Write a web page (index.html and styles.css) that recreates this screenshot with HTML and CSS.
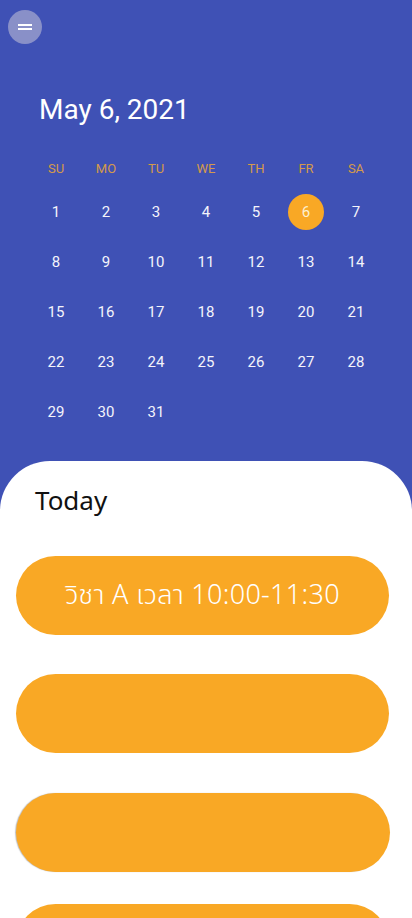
FILE: index.html
```html
<!DOCTYPE html>
<html lang="th">
<head>
<meta charset="utf-8">
<meta name="viewport" content="width=device-width, initial-scale=1">
<link rel="stylesheet" href="styles.css">
</head>
<body>
<div class="header">
  <button class="menu" aria-label="menu">
    <svg width="14" height="8" viewBox="0 0 14 8"><rect x="0" y="1" width="14" height="2" fill="#fff"/><rect x="0" y="5" width="14" height="2" fill="#fff"/></svg>
  </button>
  <div class="date">May 6, 2021</div>
  <div class="cal">
    <div class="wd">SU</div><div class="wd">MO</div><div class="wd">TU</div><div class="wd">WE</div><div class="wd">TH</div><div class="wd">FR</div><div class="wd">SA</div>
    <div class="d">1</div><div class="d">2</div><div class="d">3</div><div class="d">4</div><div class="d">5</div><div class="d"><span class="sel">6</span></div><div class="d">7</div>
    <div class="d">8</div><div class="d">9</div><div class="d">10</div><div class="d">11</div><div class="d">12</div><div class="d">13</div><div class="d">14</div>
    <div class="d">15</div><div class="d">16</div><div class="d">17</div><div class="d">18</div><div class="d">19</div><div class="d">20</div><div class="d">21</div>
    <div class="d">22</div><div class="d">23</div><div class="d">24</div><div class="d">25</div><div class="d">26</div><div class="d">27</div><div class="d">28</div>
    <div class="d">29</div><div class="d">30</div><div class="d">31</div>
  </div>
</div>
<div class="sheet">
  <div class="today">Today</div>
  <div class="card card-first">วิชา A เวลา 10:00-11:30</div>
  <div class="card card-second"></div>
  <div class="card card-third"></div>
  <div class="card card-last"></div>
</div>
</body>
</html>
```
FILE: styles.css
```css
html, body {
  margin: 0;
  padding: 0;
}
body {
  background: #3f51b5;
  font-family: Roboto, "Noto Sans", sans-serif;
  height: 918px;
  overflow: hidden;
}
.header {
  padding: 10px 0 24px 0;
}
.menu {
  display: flex;
  align-items: center;
  justify-content: center;
  width: 34px;
  height: 34px;
  margin-left: 8px;
  padding: 0;
  border: none;
  border-radius: 50%;
  background: #8990c8;
}
.date {
  margin: 50px 0 0 39px;
  font-size: 28px;
  line-height: 32px;
  color: #fff;
}
.cal {
  display: grid;
  grid-template-columns: repeat(7, 50px);
  grid-template-rows: 37px repeat(5, 50px);
  margin: 24px 0 0 31px;
}
.wd {
  display: flex;
  align-items: center;
  justify-content: center;
  padding-bottom: 1px;
  font-size: 13px;
  color: #d49a4a;
}
.d {
  display: flex;
  align-items: center;
  justify-content: center;
  font-size: 15px;
  color: #f4f4fb;
}
.sel {
  display: flex;
  align-items: center;
  justify-content: center;
  width: 36px;
  height: 36px;
  border-radius: 50%;
  background: #f9a825;
  color: #fdf0d0;
}
.sheet {
  box-sizing: border-box;
  background: #fff;
  border-radius: 50px 50px 0 0;
  padding: 21px 0 0 0;
  height: 457px;
  overflow: hidden;
}
.today {
  margin-left: 35px;
  font-family: "Noto Sans", sans-serif;
  font-size: 26px;
  line-height: 36px;
  color: #111;
}
.card {
  display: flex;
  align-items: center;
  justify-content: center;
  flex-shrink: 0;
  width: 373px;
  height: 79px;
  margin-left: 16px;
  border-radius: 40px;
  background: #f9a825;
  color: #fff;
  font-family: "Noto Sans", "Noto Sans Thai", sans-serif;
  font-size: 27px;
  font-weight: 300;
  letter-spacing: 0.3px;
}
.card-first {
  margin-top: 38px;
}
.card-second {
  margin-top: 39px;
}
.card-third {
  margin-top: 40px;
  width: 374px;
  box-shadow: -1px 0 1px rgba(0,0,0,0.25);
}
.card-last {
  margin-top: 32px;
}
```
